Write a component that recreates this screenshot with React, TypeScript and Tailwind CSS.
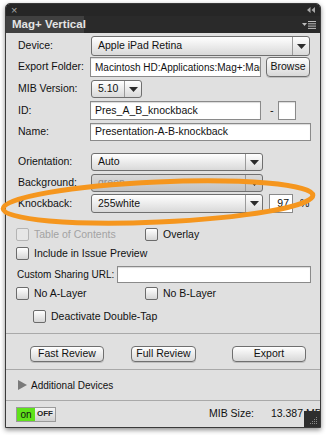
import React from 'react';

function Arrow() {
  return (
    <svg width="9" height="5" viewBox="0 0 9 5">
      <path d="M0 0h9L4.5 5z" fill="#2b2b2b" />
    </svg>
  );
}

function Select({ value, className = '', disabled = false }: { value: string; className?: string; disabled?: boolean }) {
  return (
    <div
      className={`flex h-full shrink-0 items-stretch rounded-[3px] border border-[#6f6f6f] bg-linear-to-b ${
        disabled ? 'from-[#d9d9d9] to-[#c2c2c2] text-[#8c8c8c]' : 'from-white to-[#d9d9d9] text-[#111]'
      } ${className}`}
    >
      <div className="flex flex-1 items-center pl-[6px] text-[10.5px]">{value}</div>
      <div className="flex w-[17px] items-center justify-center border-l border-[#9a9a9a]">
        <Arrow />
      </div>
    </div>
  );
}

function Input({ value = '', className = '' }: { value?: string; className?: string }) {
  return (
    <div
      className={`flex h-full min-w-0 shrink-0 items-center overflow-hidden whitespace-nowrap border border-[#8a8a8a] bg-white pl-[4px] text-[10.5px] text-[#111] shadow-[inset_0_1px_1px_rgba(0,0,0,0.15)] ${className}`}
    >
      {value}
    </div>
  );
}

function Check({ label, disabled = false }: { label: string; disabled?: boolean }) {
  return (
    <div className="flex items-center gap-[5px]">
      <div
        className={`h-[13px] w-[13px] rounded-[2px] border ${
          disabled ? 'border-[#b4b4b4] bg-[#e6e6e6]' : 'border-[#6b6b6b] bg-linear-to-b from-white to-[#d6d6d6]'
        }`}
      />
      <span className={`whitespace-nowrap text-[10.5px] ${disabled ? 'text-[#a3a3a3]' : 'text-[#111]'}`}>{label}</span>
    </div>
  );
}

function Button({ label, className = '' }: { label: string; className?: string }) {
  return (
    <div
      className={`flex h-[16px] shrink-0 items-center justify-center rounded-[4px] border border-[#6f6f6f] bg-linear-to-b from-white to-[#d8d8d8] text-[10.5px] text-[#111] shadow-[0_1px_0_rgba(0,0,0,0.15)] ${className}`}
    >
      {label}
    </div>
  );
}

function Row({ label, children, className = '' }: { label: string; children: React.ReactNode; className?: string }) {
  return (
    <div className={`flex items-center pl-[12px] ${className}`}>
      <div className="w-[73px] shrink-0 whitespace-nowrap text-[10.5px] text-[#111]">{label}</div>
      {children}
    </div>
  );
}

export default function App() {
  return (
    <div className="relative h-[435px] w-[326px] bg-white font-['Liberation_Sans',Arial,sans-serif]">
      <div className="ml-[5px] pt-[3px]">
        <div className="flex h-[425px] w-[316px] flex-col overflow-hidden rounded-t-[5px] border border-[#3a3a3a] bg-[#e0e0e0] shadow-[0_2px_5px_rgba(0,0,0,0.45)]">
          {/* title bar */}
          <div className="flex h-[12px] shrink-0 items-center justify-between bg-[#262626] px-[5px]">
            <span className="text-[11px] leading-none text-[#a8a8a8]">×</span>
            <svg width="8" height="6" viewBox="0 0 8 6">
              <path d="M3.5 0v6L0 3z M8 0v6L4.5 3z" fill="#a8a8a8" />
            </svg>
          </div>
          {/* tab strip */}
          <div className="flex h-[17px] shrink-0 items-stretch justify-between bg-[#2a2a2a]">
            <div className="flex w-[78px] items-center whitespace-nowrap bg-[#404040] pl-[6px] text-[11.5px] font-bold text-[#e4e4e4]">
              Mag+ Vertical
            </div>
            <div className="flex items-center gap-[1px] pr-[4px]">
              <svg width="5" height="3" viewBox="0 0 5 3">
                <path d="M0 0h5L2.5 3z" fill="#bdbdbd" />
              </svg>
              <svg width="8" height="8" viewBox="0 0 8 8">
                <path d="M0 0.5h8M0 2.8h8M0 5.1h8M0 7.4h8" stroke="#bdbdbd" strokeWidth="1" />
              </svg>
            </div>
          </div>

          {/* body */}
          <Row label="Device:" className="mt-[3px] h-[20px]">
            <Select value="Apple iPad Retina" className="w-[219px]" />
          </Row>
          <Row label="Export Folder:" className="mt-[1px] h-[20px]">
            <Input value="Macintosh HD:Applications:Mag+:Mag+ F" className="-ml-px h-[18px] w-[171px] !text-[10px]" />
            <Button label="Browse" className="ml-[5px] h-[20px] w-[44px]" />
          </Row>
          <Row label="MIB Version:" className="mt-[3px] h-[18px]">
            <Select value="5.10" className="w-[51px]" />
          </Row>
          <Row label="ID:" className="mt-[3px] h-[19px]">
            <Input value="Pres_A_B_knockback" className="-ml-px w-[171px]" />
            <span className="ml-[9px] w-[8px] text-[11px] text-[#111]">-</span>
            <Input className="w-[18px]" />
          </Row>
          <Row label="Name:" className="mt-[3px] h-[18px]">
            <Input value="Presentation-A-B-knockback" className="-ml-px w-[221px]" />
          </Row>

          <Row label="Orientation:" className="mt-[12px] h-[18px]">
            <Select value="Auto" className="w-[172px]" />
          </Row>
          <Row label="Background:" className="mt-[3px] h-[18px]">
            <Select value="green" className="w-[172px]" disabled />
          </Row>
          <Row label="Knockback:" className="mt-[2px] h-[19px]">
            <Select value="255white" className="w-[172px]" />
            <div className="ml-[6px] flex h-full w-[24px] shrink-0 items-center justify-end border border-[#8a8a8a] bg-white pr-[3px] text-[10.5px] text-[#111]">
              97
            </div>
            <span className="ml-[7px] text-[10.5px] text-[#111]">%</span>
          </Row>

          <div className="mt-[15px] flex h-[13px] items-center pl-[10px]">
            <div className="w-[129px]">
              <Check label="Table of Contents" disabled />
            </div>
            <Check label="Overlay" />
          </div>
          <div className="mt-[6px] flex h-[13px] items-center pl-[10px]">
            <Check label="Include in Issue Preview" />
          </div>
          <div className="mt-[6px] flex h-[17px] items-center pl-[11px]">
            <span className="w-[100px] shrink-0 whitespace-nowrap text-[10px] text-[#111]">Custom Sharing URL:</span>
            <Input className="w-[194px]" />
          </div>
          <div className="mt-[4px] flex h-[13px] items-center pl-[10px]">
            <div className="w-[129px]">
              <Check label="No A-Layer" />
            </div>
            <Check label="No B-Layer" />
          </div>
          <div className="mt-[10px] flex h-[13px] items-center pl-[27px]">
            <Check label="Deactivate Double-Tap" />
          </div>

          <div className="mt-[10px] h-px shrink-0 bg-[#a9a9a9]" />

          <div className="mt-[12px] flex items-center pl-[24px]">
            <Button label="Fast Review" className="w-[74px]" />
            <Button label="Full Review" className="ml-[27px] w-[65px]" />
            <Button label="Export" className="ml-[36px] w-[74px]" />
          </div>

          <div className="mt-[7px] h-px shrink-0 bg-[#a9a9a9]" />

          <div className="flex h-[30px] shrink-0 items-center gap-[4px] pl-[12px]">
            <svg width="9" height="10" viewBox="0 0 9 10">
              <path d="M0 0l9 5-9 5z" fill="#7a7a7a" />
            </svg>
            <span className="text-[10px] text-[#111]">Additional Devices</span>
          </div>

          <div className="h-px shrink-0 bg-[#a9a9a9]" />

          <div className="relative flex flex-1 items-center whitespace-nowrap pl-[10px]">
            <div className="flex h-[15px] border border-[#9a9a9a]">
              <div className="flex w-[18px] items-center justify-center bg-[#5fe21a] text-[10px] text-[#111]">on</div>
              <div className="flex w-[20px] items-center justify-center bg-linear-to-b from-[#f4f4f4] to-[#d0d0d0] text-[8px] font-bold text-[#222]">
                OFF
              </div>
            </div>
            <span className="ml-[153px] text-[10.5px] text-[#111]">MIB Size:</span>
            <span className="ml-[17px] text-[10.5px] text-[#111]">13.387 MB</span>
            <div className="absolute bottom-0 right-0 flex h-[16px] w-[16px] items-end justify-end bg-[#2e2e2e] p-[2px]">
              <svg width="9" height="9" viewBox="0 0 9 9">
                <g fill="#8a8a8a">
                  <rect x="7" y="1" width="1" height="1" />
                  <rect x="5" y="3" width="1" height="1" />
                  <rect x="7" y="3" width="1" height="1" />
                  <rect x="3" y="5" width="1" height="1" />
                  <rect x="5" y="5" width="1" height="1" />
                  <rect x="7" y="5" width="1" height="1" />
                  <rect x="1" y="7" width="1" height="1" />
                  <rect x="3" y="7" width="1" height="1" />
                  <rect x="5" y="7" width="1" height="1" />
                  <rect x="7" y="7" width="1" height="1" />
                </g>
              </svg>
            </div>
          </div>
        </div>
      </div>

      {/* orange highlight ellipse drawn over the panel */}
      <svg className="pointer-events-none absolute left-0 top-0" width="326" height="435" viewBox="0 0 326 435">
        <ellipse
          cx="158"
          cy="202"
          rx="155"
          ry="20"
          transform="rotate(-2.5 158 202)"
          fill="none"
          stroke="#f5961e"
          strokeWidth="5"
        />
      </svg>
    </div>
  );
}
